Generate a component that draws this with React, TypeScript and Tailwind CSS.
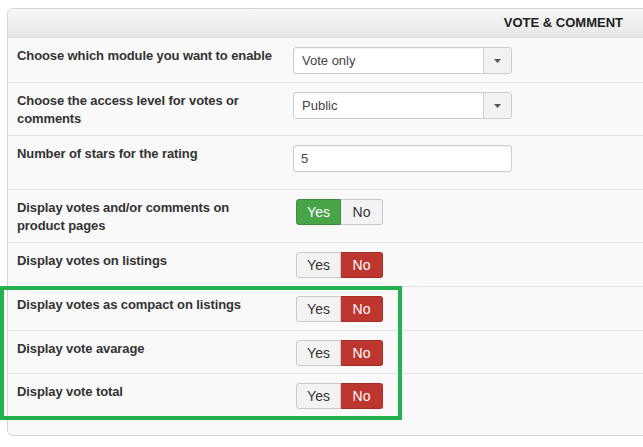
import React from "react";

type Row = {
  label: string;
  height: string;
  control: "select" | "input" | "toggle";
  value?: string;
  on?: boolean;
};

const rows: Row[] = [
  { label: "Choose which module you want to enable", height: "h-[45px]", control: "select", value: "Vote only" },
  { label: "Choose the access level for votes or comments", height: "h-[53px]", control: "select", value: "Public" },
  { label: "Number of stars for the rating", height: "h-[54px]", control: "input", value: "5" },
  { label: "Display votes and/or comments on product pages", height: "h-[53px]", control: "toggle", on: true },
  { label: "Display votes on listings", height: "h-[44px]", control: "toggle", on: false },
  { label: "Display votes as compact on listings", height: "h-[44px]", control: "toggle", on: false },
  { label: "Display vote avarage", height: "h-[43px]", control: "toggle", on: false },
  { label: "Display vote total", height: "h-[61px]", control: "toggle", on: false },
];

function Select({ value }: { value: string }) {
  return (
    <div className="flex h-[27px] w-[219px] rounded-[3px] border border-[#ccc] bg-white shadow-[inset_0_1px_1px_rgba(0,0,0,0.05)]">
      <div className="flex flex-1 items-center pl-[8px] text-[13px] text-[#444]">{value}</div>
      <div className="flex w-[28px] items-center justify-center rounded-r-[3px] border-l border-[#ccc] bg-[#f2f2f2]">
        <svg width="7" height="4" viewBox="0 0 7 4">
          <path d="M0 0h7L3.5 4z" fill="#555" />
        </svg>
      </div>
    </div>
  );
}

function Toggle({ on }: { on: boolean }) {
  return (
    <div className="ml-[3px] flex h-[26px] text-[14px]">
      <div
        className={`flex w-[45px] items-center justify-center rounded-l-[3px] border ${
          on ? "border-[#3d8b3d] bg-[#47a447] text-white" : "border-[#c8c8c8] bg-[#f3f3f3] text-[#333]"
        }`}
      >
        Yes
      </div>
      <div
        className={`flex w-[42px] items-center justify-center rounded-r-[3px] border border-l-0 ${
          on ? "border-[#c8c8c8] bg-[#f3f3f3] text-[#333]" : "border-[#a52d26] bg-[#bd362f] text-white"
        }`}
      >
        No
      </div>
    </div>
  );
}

export default function App() {
  return (
    <div
      className="relative h-[447px] w-[643px] overflow-hidden bg-white pl-[7px] pt-[8px]"
      style={{ fontFamily: '"Liberation Sans", Arial, sans-serif' }}
    >
      <div className="w-[645px] rounded-[6px] border border-[#d4d4d4] bg-[#f9f9f9]">
        <div className="flex h-[29px] items-center justify-end rounded-t-[6px] border-b border-[#dcdcdc] bg-gradient-to-b from-[#f8f8f8] to-[#e6e6e6] pr-[28px] text-[13px] font-bold text-[#222]">
          VOTE &amp; COMMENT
        </div>
        {rows.map((r, i) => (
          <div
            key={r.label}
            className={`flex items-start pt-[9px] ${r.height} ${i < rows.length - 1 ? "border-b border-[#e2e2e2]" : ""}`}
          >
            <div className="w-[285px] pl-[9px] pr-[15px] text-[13px] font-bold leading-[18px] tracking-[-0.1px] text-[#333]">
              {r.label}
            </div>
            {r.control === "select" && <Select value={r.value!} />}
            {r.control === "input" && (
              <div className="flex h-[27px] w-[219px] items-center rounded-[3px] border border-[#ccc] bg-white pl-[7px] text-[13px] text-[#444] shadow-[inset_0_1px_1px_rgba(0,0,0,0.05)]">
                {r.value}
              </div>
            )}
            {r.control === "toggle" && <Toggle on={!!r.on} />}
          </div>
        ))}
      </div>
      {/* highlight annotation */}
      <div className="absolute left-0 top-[286px] h-[134px] w-[402px] border-[4px] border-[#22b14c]" />
    </div>
  );
}
